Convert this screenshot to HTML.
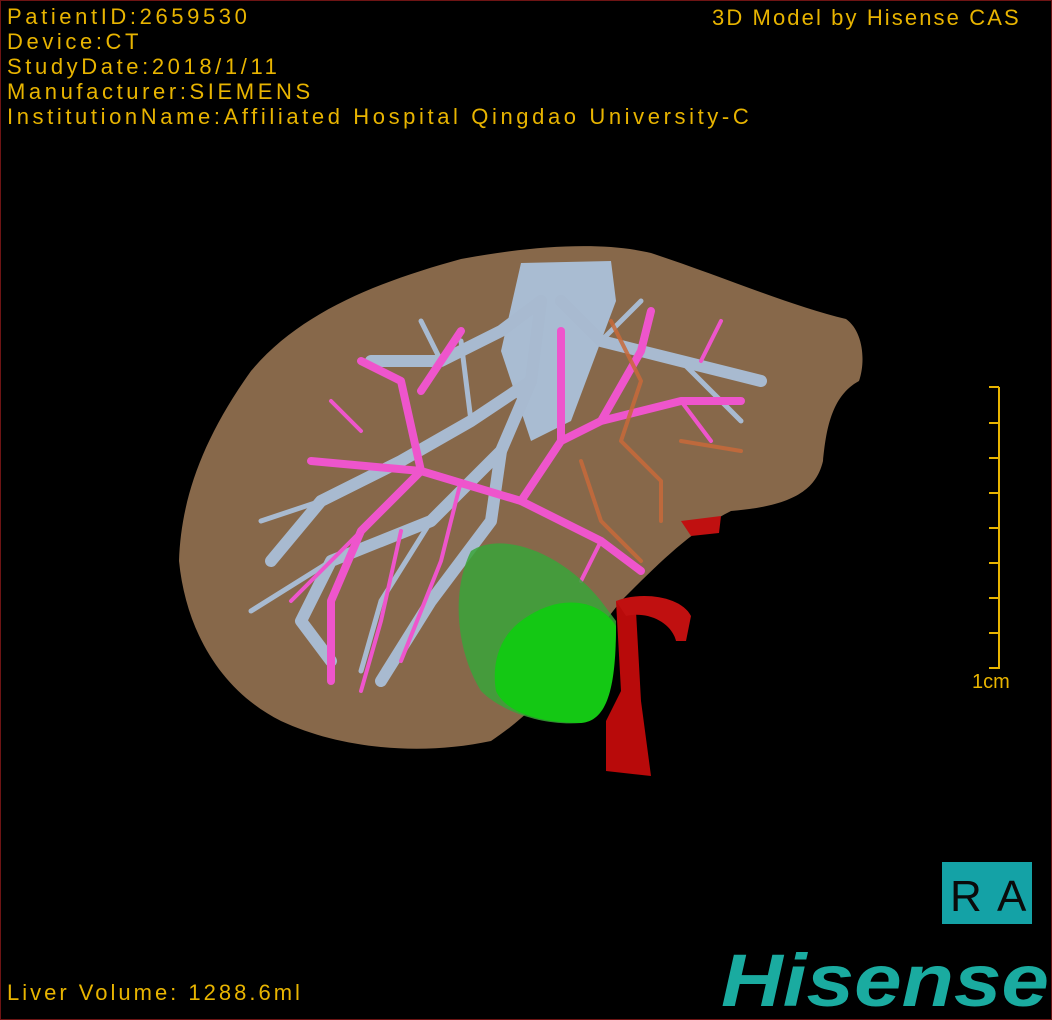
<!DOCTYPE html>
<html><head><meta charset="utf-8"><style>
html,body{margin:0;padding:0;background:#000;}
#f{position:relative;width:1050px;height:1018px;border:1px solid #6e1414;background:#000;overflow:hidden;font-family:"Liberation Sans","Noto Sans CJK SC",sans-serif;}
.t{position:absolute;color:#e8b400;font-size:22px;line-height:25px;white-space:nowrap;letter-spacing:3.6px;}
</style></head><body><div id="f">
<div class="t" style="left:6px;top:3px">PatientID:2659530<br>Device:CT<br>StudyDate:2018/1/11<br>Manufacturer:SIEMENS<br>InstitutionName:Affiliated Hospital Qingdao University-C</div>
<div class="t" style="left:711px;top:4px;letter-spacing:2.1px">3D Model by Hisense CAS</div>
<div class="t" style="left:6px;top:979px;letter-spacing:3px">Liver Volume: 1288.6ml</div>
<svg width="1050" height="1018" style="position:absolute;left:0;top:0">
<path d="M178,560 C180,500 200,440 250,370 C300,310 380,280 460,258 C530,245 600,240 650,252 C720,275 790,305 845,318 C862,330 865,360 858,380 C830,395 825,430 822,460 C815,490 790,505 730,510 C690,530 660,560 620,600 C580,650 550,700 490,740 C420,755 340,748 280,720 C220,690 185,630 178,560 Z" fill="#87684a"/>
<path d="M520,262 L610,260 L615,300 L570,420 L530,440 L500,350 Z" fill="#a9bcd2"/>
<g fill="none" stroke-linecap="round" stroke-linejoin="round">
<g stroke="#a8bad0" stroke-width="12">
<path d="M540,300 L530,380 L500,450 L430,520 L330,560 L300,620 L330,660"/>
<path d="M530,380 L470,420 L400,460 L320,500 L270,560"/>
<path d="M500,450 L490,520 L430,600 L380,680"/>
<path d="M560,300 L600,340 L680,360 L760,380"/>
<path d="M540,300 L500,330 L440,360 L370,360"/>
</g>
<g stroke="#a8bad0" stroke-width="5">
<path d="M430,520 L380,600 L360,670"/><path d="M320,500 L260,520"/><path d="M470,420 L460,340"/><path d="M680,360 L740,420"/><path d="M600,340 L640,300"/><path d="M330,560 L250,610"/><path d="M440,360 L420,320"/>
</g>
<g stroke="#ee55cc" stroke-width="8">
<path d="M310,460 L420,470 L520,500 L600,540 L640,570"/>
<path d="M420,470 L400,380 L360,360"/>
<path d="M520,500 L560,440 L600,420 L680,400 L740,400"/>
<path d="M560,440 L560,330"/>
<path d="M600,420 L640,350 L650,310"/>
<path d="M420,470 L360,530 L330,600 L330,680"/>
<path d="M460,330 L420,390"/>
</g>
<g stroke="#ee55cc" stroke-width="4">
<path d="M360,530 L290,600"/><path d="M400,530 L380,620 L360,690"/><path d="M460,480 L440,560 L400,660"/><path d="M680,400 L710,440"/><path d="M330,400 L360,430"/><path d="M600,540 L580,580"/><path d="M700,360 L720,320"/>
</g>
<g stroke="#c86a3a" stroke-width="4" opacity="0.85">
<path d="M610,320 L640,380 L620,440 L660,480 L660,520"/><path d="M580,460 L600,520 L640,560"/><path d="M680,440 L740,450"/>
</g>
</g>
<path d="M470,550 C500,530 560,550 600,600 L615,620 C615,680 605,715 580,722 C540,725 500,710 480,690 C455,650 450,590 470,550 Z" fill="#3aa53a" opacity="0.85"/>
<path d="M520,620 C560,590 600,600 615,625 C615,690 605,720 580,722 C540,722 505,712 495,690 C490,660 500,635 520,620 Z" fill="#14c814"/>
<path d="M615,600 L620,690 L605,720 L605,770 L650,775 L640,700 L635,610 Z" fill="#b80a0a"/>
<path d="M615,600 C640,590 680,595 690,615 L685,640 L675,640 C670,620 645,610 625,615 Z" fill="#c01010"/>
<path d="M680,520 L720,515 L718,532 L690,535 Z" fill="#c01010"/>
<g stroke="#e8b400" stroke-width="2">
<line x1="998" y1="386" x2="998" y2="668"/>
<line x1="988" y1="386" x2="998" y2="386"/><line x1="988" y1="422" x2="998" y2="422"/><line x1="988" y1="457" x2="998" y2="457"/><line x1="988" y1="492" x2="998" y2="492"/><line x1="988" y1="527" x2="998" y2="527"/><line x1="988" y1="562" x2="998" y2="562"/><line x1="988" y1="597" x2="998" y2="597"/><line x1="988" y1="632" x2="998" y2="632"/><line x1="988" y1="667" x2="998" y2="667"/>
</g>
<text x="971" y="687" fill="#e8b400" font-family="Liberation Sans" font-size="20">1cm</text>
<rect x="941" y="861" width="90" height="62" fill="#14a2a6"/>
<text x="949" y="910" fill="#0a0a0a" font-family="Liberation Sans" font-size="44">R</text>
<text x="996" y="910" fill="#0a0a0a" font-family="Liberation Sans" font-size="44">A</text>
<text x="720" y="1005" fill="#1aaba0" font-family="Liberation Sans" font-weight="bold" font-style="italic" font-size="74" textLength="328" lengthAdjust="spacingAndGlyphs">Hisense</text>
</svg>
</div></body></html>
